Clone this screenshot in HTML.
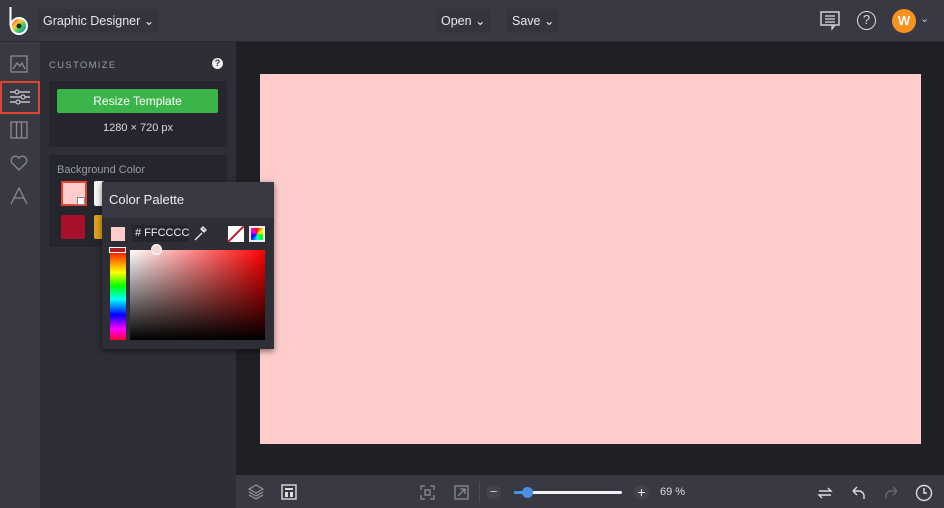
<!DOCTYPE html>
<html><head><meta charset="utf-8"><style>
*{box-sizing:border-box;margin:0;padding:0}
body{width:944px;height:508px;overflow:hidden;background:#1f2025;font-family:"Liberation Sans",sans-serif;position:relative;color:#e6e6ea}
.abs{position:absolute;white-space:nowrap}
.top{left:0;top:0;width:944px;height:42px;background:#383943;border-bottom:1px solid #2a2b31}
.btn{background:#33343d;border-radius:2px;font-size:12.5px;color:#e8e8ec;height:24px;line-height:24px;padding:0 5px}
.side{left:0;top:42px;width:40px;height:466px;background:#383943}
.panel{left:40px;top:42px;width:196px;height:466px;background:#2d2e36}
.bottom{left:236px;top:475px;width:708px;height:33px;background:#383943}
.ic{stroke:#8a8b95;fill:none;stroke-width:1.3}
</style></head><body>
<div class="abs top"></div>
<div class="abs" style="left:260px;top:74px;width:661px;height:370px;background:#ffcccc"></div>
<svg class="abs" style="left:7px;top:6px" width="24" height="30"><path d="M3.5 1v19" stroke="#fff" stroke-width="2"/><circle cx="12" cy="20" r="9" fill="#fff"/><circle cx="12" cy="20" r="7" fill="url(#g)"/><defs><linearGradient id="g" x1="0" y1="0" x2="1" y2="1"><stop offset="0" stop-color="#e33"/><stop offset=".35" stop-color="#fc3"/><stop offset=".65" stop-color="#3c6"/><stop offset="1" stop-color="#36c"/></linearGradient></defs><circle cx="12" cy="20" r="2.5" fill="#222"/></svg>
<div class="abs btn" style="left:38px;top:9px">Graphic Designer ⌄</div>
<div class="abs btn" style="left:436px;top:9px">Open ⌄</div>
<div class="abs btn" style="left:507px;top:9px">Save ⌄</div>
<svg class="abs" style="left:820px;top:11px" width="22" height="20"><rect x="1" y="1" width="18" height="13" fill="none" stroke="#ddd" stroke-width="1.4"/><path d="M5 5h10M5 8h10M5 11h10M12 14v4l3-4" stroke="#ddd" stroke-width="1.2" fill="none"/></svg>
<div class="abs" style="left:857px;top:11px;width:19px;height:19px;border:1.5px solid #ddd;border-radius:50%;font-size:13px;text-align:center;line-height:16px;color:#ddd">?</div>
<div class="abs" style="left:892px;top:9px;width:24px;height:24px;border-radius:50%;background:#f7921e;color:#fff;font-weight:bold;font-size:13px;text-align:center;line-height:24px">W</div>
<div class="abs" style="left:920px;top:12px;font-size:11px;color:#ccc">⌄</div>

<div class="abs side"></div>
<svg class="abs" style="left:10px;top:55px" width="18" height="18"><rect x="1" y="1" width="16" height="16" class="ic"/><path d="M3 14l4-6 3 3 2-3 3 6" class="ic"/></svg>
<div class="abs" style="left:0;top:81px;width:40px;height:33px;border:2px solid #e0442e"></div>
<svg class="abs" style="left:9px;top:88px" width="22" height="18"><path d="M1 4h20M1 9h20M1 14h20" stroke="#ddd" stroke-width="1.2"/><circle cx="8" cy="4" r="2" fill="#383943" stroke="#ddd"/><circle cx="14" cy="9" r="2" fill="#383943" stroke="#ddd"/><circle cx="9" cy="14" r="2" fill="#383943" stroke="#ddd"/></svg>
<svg class="abs" style="left:10px;top:121px" width="18" height="18"><rect x="1" y="1" width="16" height="16" class="ic"/><path d="M6.5 1v16M11.5 1v16" class="ic"/></svg>
<svg class="abs" style="left:10px;top:154px" width="18" height="17"><path d="M9 16L2 9a4 4 0 0 1 7-5a4 4 0 0 1 7 5z" class="ic"/></svg>
<svg class="abs" style="left:10px;top:187px" width="18" height="18"><path d="M1 17L9 1l8 16M4 11h10" class="ic"/></svg>

<div class="abs panel"></div>
<div class="abs" style="left:49px;top:60px;font-size:9.5px;letter-spacing:1.3px;color:#9a9ba5">CUSTOMIZE</div>
<div class="abs" style="left:212px;top:58px;width:11px;height:11px;border-radius:50%;background:#eee;color:#2d2e36;font-size:9px;font-weight:bold;text-align:center;line-height:11px">?</div>
<div class="abs" style="left:49px;top:81px;width:178px;height:66px;background:#25262d"></div>
<div class="abs" style="left:57px;top:89px;width:161px;height:24px;background:#3bb54a;border-radius:2px;font-size:12px;color:#fff;text-align:center;line-height:24px">Resize Template</div>
<div class="abs" style="left:49px;top:122px;width:178px;text-align:center;font-size:11px;color:#ddd">1280 × 720 px</div>
<div class="abs" style="left:49px;top:155px;width:178px;height:92px;background:#25262d"></div>
<div class="abs" style="left:57px;top:164px;font-size:11px;color:#9a9ba5">Background Color</div>
<div class="abs" style="left:61px;top:181px;width:26px;height:25px;background:#ffcccc;border:2px solid #e0442e"></div>
<div class="abs" style="left:77px;top:197px;width:8px;height:8px;background:#fff;border:1px solid #888"></div>
<div class="abs" style="left:94px;top:181px;width:10px;height:25px;background:#f5f5f5;border-radius:2px"></div>
<div class="abs" style="left:61px;top:215px;width:24px;height:24px;background:#a8102c;border-radius:2px"></div>
<div class="abs" style="left:94px;top:215px;width:10px;height:24px;background:#e0a020;border-radius:2px"></div>

<div class="abs" style="left:102px;top:182px;width:172px;height:167px;background:#2d2e36;box-shadow:0 2px 6px rgba(0,0,0,.5)"></div>
<div class="abs" style="left:102px;top:182px;width:172px;height:36px;background:#383943;font-size:13px;line-height:36px;padding-left:7px;color:#eee">Color Palette</div>
<div class="abs" style="left:111px;top:227px;width:14px;height:14px;background:#ffcccc"></div>
<div class="abs" style="left:132px;top:225px;width:56px;height:17px;background:#25262d;font-size:11px;line-height:17px;padding-left:3px;color:#eee"># FFCCCC</div>
<svg class="abs" style="left:193px;top:226px" width="14" height="16"><path d="M2 14l7-7M9 3l3 3M10 1l3 3-2 2-3-3z" stroke="#eee" stroke-width="1.3" fill="none"/></svg>
<div class="abs" style="left:228px;top:226px;width:16px;height:16px;background:#fff;overflow:hidden"><div style="position:absolute;left:-3px;top:7px;width:22px;height:2px;background:#b02030;transform:rotate(-45deg)"></div></div>
<div class="abs" style="left:249px;top:226px;width:16px;height:16px;background:#eee;padding:2px"><div style="width:12px;height:12px;background:conic-gradient(red,yellow,lime,cyan,blue,magenta,red)"></div></div>
<div class="abs" style="left:110px;top:250px;width:16px;height:90px;background:linear-gradient(#f00,#ff0 25%,#0f0 40%,#0ff 55%,#00f 72%,#f0f 88%,#f03)"></div>
<div class="abs" style="left:109px;top:247px;width:17px;height:6px;border:1.5px solid #fff;background:#b01e1e"></div>
<div class="abs" style="left:130px;top:250px;width:135px;height:90px;background:linear-gradient(to bottom,rgba(0,0,0,0),#000),linear-gradient(to right,#fff,#f00)"></div>
<div class="abs" style="left:151px;top:244px;width:11px;height:11px;border-radius:50%;background:#f2d7d7;border:1.5px solid #fff"></div>

<div class="abs bottom"></div>
<svg class="abs" style="left:248px;top:484px" width="16" height="16"><path d="M8 1l7 4-7 4-7-4zM1 8l7 4 7-4M1 11l7 4 7-4" class="ic"/></svg>
<svg class="abs" style="left:281px;top:484px" width="16" height="16"><rect x="1" y="1" width="14" height="14" fill="none" stroke="#ddd" stroke-width="1.4"/><rect x="4" y="4" width="8" height="2" fill="#ddd"/><rect x="4" y="8" width="3" height="5" fill="#ddd"/><rect x="9" y="8" width="3" height="5" fill="#ddd"/></svg>
<svg class="abs" style="left:420px;top:485px" width="15" height="15"><path d="M1 5V1h4M10 1h4v4M14 10v4h-4M5 14H1v-4" class="ic"/><rect x="5" y="5" width="5" height="5" class="ic"/></svg>
<svg class="abs" style="left:454px;top:485px" width="15" height="15"><rect x="1" y="1" width="13" height="13" class="ic"/><path d="M4 11l7-7M6 4h5v5" class="ic"/></svg>
<div class="abs" style="left:479px;top:482px;width:1px;height:20px;background:#4a4b55"></div>
<div class="abs" style="left:486px;top:485px;width:15px;height:15px;border-radius:50%;background:#42434d;color:#ccc;font-size:13px;text-align:center;line-height:14px">−</div>
<div class="abs" style="left:514px;top:491px;width:108px;height:3px;background:#f2f2f2;border-radius:2px"></div>
<div class="abs" style="left:514px;top:491px;width:14px;height:3px;background:#4a90e2"></div>
<div class="abs" style="left:522px;top:487px;width:11px;height:11px;border-radius:50%;background:#4a90e2"></div>
<div class="abs" style="left:634px;top:485px;width:15px;height:15px;border-radius:50%;background:#42434d;color:#eee;font-size:14px;text-align:center;line-height:15px">+</div>
<div class="abs" style="left:660px;top:486px;font-size:11px;color:#ddd">69 %</div>
<svg class="abs" style="left:817px;top:485px" width="16" height="16"><path d="M2 6h12l-3-3M14 10H2l3 3" stroke="#ddd" stroke-width="1.4" fill="none"/></svg>
<svg class="abs" style="left:851px;top:485px" width="16" height="16"><path d="M2 6l4-4M2 6l4 4M2 6h6a5 5 0 0 1 5 5v3" stroke="#ddd" stroke-width="1.4" fill="none"/></svg>
<svg class="abs" style="left:883px;top:485px" width="16" height="16"><path d="M14 6l-4-4M14 6l-4 4M14 6H8a5 5 0 0 0-5 5v3" stroke="#66676f" stroke-width="1.4" fill="none"/></svg>
<svg class="abs" style="left:915px;top:484px" width="18" height="18"><circle cx="9" cy="9" r="7.5" stroke="#ddd" stroke-width="1.4" fill="none"/><path d="M9 4v5h3" stroke="#ddd" stroke-width="1.4" fill="none"/></svg>
</body></html>
